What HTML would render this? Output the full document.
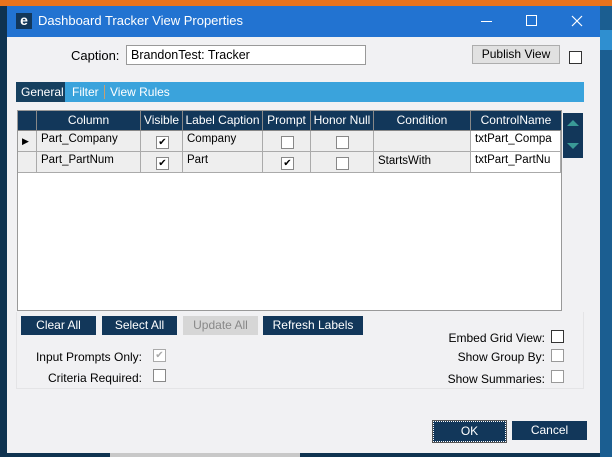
<!DOCTYPE html>
<html><head><style>
*{box-sizing:border-box;margin:0;padding:0}
body{width:612px;height:457px;overflow:hidden;background:#0f3350;font-family:"Liberation Sans",Arial,sans-serif;font-size:12px;color:#000;position:relative}
.a{position:absolute}
.btn{position:absolute;background:#12375a;color:#fff;text-align:center;line-height:19px;font-size:12px}
.cb{position:absolute;width:13px;height:13px;border:1px solid #777;background:#fff}
.hd{position:absolute;top:0;height:19px;line-height:19px;color:#fff;text-align:center;border-right:1px solid #888;font-size:12px}
.cell{position:absolute;height:21px;border-right:1px solid #aaa;border-bottom:1px solid #aaa;line-height:17px;padding-left:4px;font-size:11.5px}
.lbl{position:absolute;text-align:right;font-size:12px}
.ck{font-size:10px;line-height:11px;text-align:center}
</style></head><body>
<div class="a" style="left:0;top:0;width:612px;height:6px;background:#e8731c"></div>
<div class="a" style="left:600px;top:6px;width:12px;height:451px;background:#1b5e91"></div>
<div class="a" style="left:600px;top:30px;width:12px;height:20px;background:#2f8fd0"></div>
<div class="a" style="left:7px;top:6px;width:593px;height:447px;background:#f1f1f3"></div>
<div class="a" style="left:7px;top:6px;width:593px;height:31px;background:#2273d1"></div>
<div class="a" style="left:16px;top:13px;width:16px;height:16px;background:#12375a;color:#fff;font-weight:bold;font-size:14px;line-height:15px;text-align:center">e</div>
<div class="a" style="left:38px;top:13px;color:#fff;font-size:13px">Dashboard Tracker View Properties</div>
<div class="a" style="left:481px;top:21px;width:11px;height:1px;background:#fff"></div>
<div class="a" style="left:526px;top:15px;width:11px;height:11px;border:1px solid #fff"></div>
<svg class="a" style="left:571px;top:15px" width="12" height="12"><path d="M1 1L11 11M11 1L1 11" stroke="#fff" stroke-width="1.2"/></svg>

<div class="a" style="left:71px;top:48px;font-size:13px">Caption:</div>
<div class="a" style="left:126px;top:45px;width:240px;height:20px;background:#fff;border:1px solid #999;padding-left:4px;line-height:18px;font-size:12.5px">BrandonTest: Tracker</div>
<div class="a" style="left:472px;top:45px;width:88px;height:19px;background:#e1e1e1;border:1px solid #adadad;text-align:center;line-height:17px;font-size:12px">Publish View</div>
<div class="cb" style="left:569px;top:51px;border-color:#333"></div>

<div class="a" style="left:16px;top:82px;width:568px;height:20px;background:#3aa3dc"></div>
<div class="a" style="left:16px;top:82px;width:49px;height:20px;background:#16405f;color:#fff;line-height:20px;padding-left:5px">General</div>
<div class="a" style="left:72px;top:82px;color:#fff;line-height:20px">Filter</div>
<div class="a" style="left:104px;top:85px;width:1px;height:14px;background:#c8a070"></div>
<div class="a" style="left:110px;top:82px;color:#fff;line-height:20px">View Rules</div>

<div class="a" style="left:17px;top:110px;width:545px;height:201px;background:#fff;border:1px solid #999">
 <div class="a" style="left:0;top:0;width:543px;height:20px;background:#12375a;border-bottom:1px solid #888"></div>
 <div class="hd" style="left:0;width:19px"></div>
 <div class="hd" style="left:19px;width:104px">Column</div>
 <div class="hd" style="left:123px;width:42px">Visible</div>
 <div class="hd" style="left:165px;width:80px">Label Caption</div>
 <div class="hd" style="left:245px;width:48px">Prompt</div>
 <div class="hd" style="left:293px;width:63px">Honor Null</div>
 <div class="hd" style="left:356px;width:97px">Condition</div>
 <div class="hd" style="left:453px;width:90px;border:0">ControlName</div>

 <div class="cell" style="left:0;top:20px;width:19px;background:#eee"><span style="font-size:9px;line-height:21px">▶</span></div>
 <div class="cell" style="left:19px;top:20px;width:104px;background:#eee">Part_Company</div>
 <div class="cell" style="left:123px;top:20px;width:42px;background:#eee"></div>
 <div class="cell" style="left:165px;top:20px;width:80px;background:#eee">Company</div>
 <div class="cell" style="left:245px;top:20px;width:48px;background:#eee"></div>
 <div class="cell" style="left:293px;top:20px;width:63px;background:#eee"></div>
 <div class="cell" style="left:356px;top:20px;width:97px;background:#eee"></div>
 <div class="cell" style="left:453px;top:20px;width:90px;background:#fff">txtPart_Compa</div>

 <div class="cell" style="left:0;top:41px;width:19px;background:#eee"></div>
 <div class="cell" style="left:19px;top:41px;width:104px;background:#eee">Part_PartNum</div>
 <div class="cell" style="left:123px;top:41px;width:42px;background:#eee"></div>
 <div class="cell" style="left:165px;top:41px;width:80px;background:#eee">Part</div>
 <div class="cell" style="left:245px;top:41px;width:48px;background:#eee"></div>
 <div class="cell" style="left:293px;top:41px;width:63px;background:#eee"></div>
 <div class="cell" style="left:356px;top:41px;width:97px;background:#eee;line-height:19px">StartsWith</div>
 <div class="cell" style="left:453px;top:41px;width:90px;background:#fff">txtPart_PartNu</div>

 <div class="cb ck" style="left:138px;top:25px;border-color:#888">✔</div>
 <div class="cb ck" style="left:138px;top:46px;border-color:#888">✔</div>
 <div class="cb" style="left:263px;top:25px;border-color:#888"></div>
 <div class="cb ck" style="left:263px;top:46px;border-color:#888">✔</div>
 <div class="cb" style="left:318px;top:25px;border-color:#888"></div>
 <div class="cb" style="left:318px;top:46px;border-color:#888"></div>
</div>

<div class="a" style="left:563px;top:113px;width:20px;height:45px;background:#12375a"></div>
<div class="a" style="left:567px;top:120px;width:0;height:0;border-left:6px solid transparent;border-right:6px solid transparent;border-bottom:6px solid #3a9a96"></div>
<div class="a" style="left:567px;top:143px;width:0;height:0;border-left:6px solid transparent;border-right:6px solid transparent;border-top:6px solid #3a9a96"></div>

<div class="a" style="left:16px;top:312px;width:568px;height:77px;border:1px solid #e4e4e6;border-top:0"></div>
<div class="btn" style="left:21px;top:316px;width:75px">Clear All</div>
<div class="btn" style="left:102px;top:316px;width:75px">Select All</div>
<div class="btn" style="left:183px;top:316px;width:75px;background:#d6d6d6;color:#888">Update All</div>
<div class="btn" style="left:263px;top:316px;width:100px">Refresh Labels</div>

<div class="lbl" style="left:20px;top:350px;width:122px">Input Prompts Only:</div>
<div class="cb ck" style="left:153px;top:349px;border-color:#aaa;color:#aaa">✔</div>
<div class="lbl" style="left:20px;top:371px;width:122px">Criteria Required:</div>
<div class="cb" style="left:153px;top:369px;border-color:#888"></div>

<div class="lbl" style="left:400px;top:331px;width:145px">Embed Grid View:</div>
<div class="cb" style="left:551px;top:330px;border-color:#333"></div>
<div class="lbl" style="left:400px;top:350px;width:145px">Show Group By:</div>
<div class="cb" style="left:551px;top:349px;border-color:#999"></div>
<div class="lbl" style="left:400px;top:372px;width:145px">Show Summaries:</div>
<div class="cb" style="left:551px;top:370px;border-color:#999"></div>

<div class="btn" style="left:433px;top:421px;width:73px;border:1px dotted #fff;outline:1px solid #555">OK</div>
<div class="btn" style="left:512px;top:421px;width:75px">Cancel</div>
<div class="a" style="left:110px;top:453px;width:190px;height:4px;background:#c8c8c8"></div>
</body></html>
